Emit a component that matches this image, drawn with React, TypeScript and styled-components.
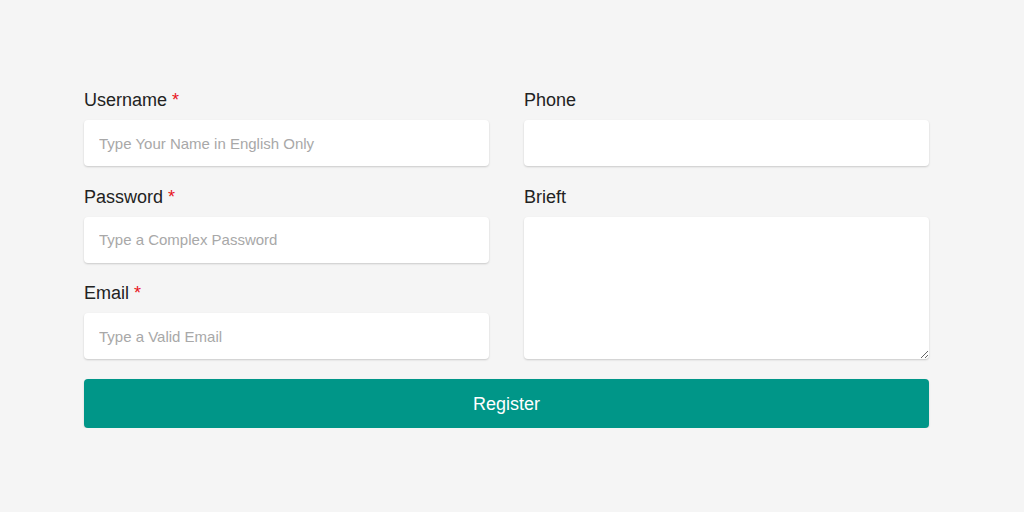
import React from "react";
import styled, { createGlobalStyle } from "styled-components";

const Global = createGlobalStyle`
  html, body { margin: 0; padding: 0; background: #f5f5f5; }
  body { font-family: "Liberation Sans", Arial, sans-serif; }
  * { box-sizing: border-box; }
`;

const Page = styled.div`
  padding: 88px 0 0 84px;
`;

const Form = styled.form`
  width: 845px;
  display: grid;
  grid-template-columns: 405px 405px;
  column-gap: 35px;
`;

const Column = styled.div`
  display: flex;
  flex-direction: column;
  gap: 18.5px;
`;

const Field = styled.div<{ $grow?: boolean }>`
  display: flex;
  flex-direction: column;
  gap: 8px;
  ${(p) => (p.$grow ? "flex: 1;" : "")}
`;

const Label = styled.label`
  font-size: 18px;
  line-height: 24px;
  color: #222;
`;

const Star = styled.span`
  color: #e8141c;
  margin-left: 5px;
`;

const Input = styled.input`
  height: 46px;
  border: none;
  border-radius: 4px;
  background: #fff;
  box-shadow: 0 1px 2px rgba(0, 0, 0, 0.18);
  padding: 0 15px;
  font-family: inherit;
  font-size: 15px;
  color: #333;
  outline: none;
  &::placeholder { color: #a8a8a8; }
`;

const TextArea = styled.textarea`
  flex: 1;
  border: none;
  border-radius: 4px;
  background: #fff;
  box-shadow: 0 1px 2px rgba(0, 0, 0, 0.18);
  padding: 12px 15px;
  font-family: inherit;
  font-size: 15px;
  outline: none;
`;

const Button = styled.button`
  grid-column: 1 / -1;
  margin-top: 20px;
  height: 49px;
  padding-top: 2px;
  border: none;
  border-radius: 4px;
  background: #009688;
  color: #fff;
  font-family: inherit;
  font-size: 18px;
  box-shadow: 0 1px 2px rgba(0, 0, 0, 0.15);
  cursor: pointer;
`;

export default function App() {
  return (
    <Page>
      <Global />
      <Form onSubmit={(e) => e.preventDefault()}>
        <Column>
          <Field>
            <Label>Username<Star>*</Star></Label>
            <Input placeholder="Type Your Name in English Only" />
          </Field>
          <Field>
            <Label>Password<Star>*</Star></Label>
            <Input type="password" placeholder="Type a Complex Password" />
          </Field>
          <Field>
            <Label>Email<Star>*</Star></Label>
            <Input placeholder="Type a Valid Email" />
          </Field>
        </Column>
        <Column>
          <Field>
            <Label>Phone</Label>
            <Input />
          </Field>
          <Field $grow>
            <Label>Brieft</Label>
            <TextArea />
          </Field>
        </Column>
        <Button type="submit">Register</Button>
      </Form>
    </Page>
  );
}
